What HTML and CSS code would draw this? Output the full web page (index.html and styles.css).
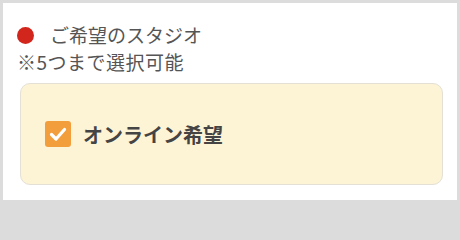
FILE: index.html
```html
<!DOCTYPE html>
<html lang="ja">
<head>
<meta charset="utf-8">
<link rel="stylesheet" href="styles.css">
</head>
<body>
<div class="panel">
  <div class="title">
    <span class="dot"></span>
    <span class="title-text">ご希望のスタジオ</span>
  </div>
  <div class="note">※5つまで選択可能</div>
  <div class="box">
    <label class="option">
      <span class="check">
        <svg viewBox="0 0 26 26" width="26" height="26"><path d="M6.5 13.5 L11 18 L19.5 8.5" fill="none" stroke="#fff" stroke-width="3.2" stroke-linecap="round" stroke-linejoin="round"/></svg>
      </span>
      <span class="option-text">オンライン希望</span>
    </label>
  </div>
</div>
</body>
</html>
```
FILE: styles.css
```css
html, body {
  margin: 0;
  padding: 0;
}
body {
  width: 460px;
  height: 204px;
  background: #dcdcdc;
  font-family: "Noto Sans CJK JP", "Noto Sans", sans-serif;
  overflow: hidden;
}
.panel {
  margin: 3px 3px 0 3px;
  height: 197px;
  background: #fff;
  box-sizing: border-box;
  padding: 18px 14px 0 14px;
}
.title {
  display: flex;
  align-items: center;
  height: 28px;
}
.dot {
  width: 17px;
  height: 17px;
  border-radius: 50%;
  background: #d2261c;
  flex: none;
}
.title-text {
  margin-left: 16px;
  font-size: 19px;
  color: #555;
  line-height: 28px;
}
.note {
  font-size: 19px;
  letter-spacing: 0.5px;
  color: #555;
  line-height: 26px;
  height: 26px;
}
.box {
  margin-top: 8px;
  margin-left: 3px;
  width: 423px;
  height: 102px;
  box-sizing: border-box;
  background: #fdf3d5;
  border: 1px solid #e4e0d6;
  border-radius: 10px;
  display: flex;
  align-items: center;
  padding-left: 24px;
}
.option {
  display: flex;
  align-items: center;
}
.check {
  width: 26px;
  height: 26px;
  border-radius: 3px;
  background: #f29e3c;
  display: flex;
}
.option-text {
  margin-left: 12px;
  font-size: 20px;
  font-weight: bold;
  color: #444;
}
```
